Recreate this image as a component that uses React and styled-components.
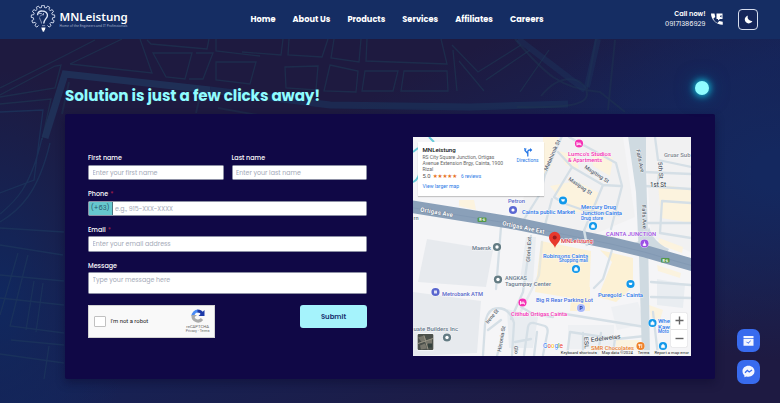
import React from "react";
import styled, { createGlobalStyle } from "styled-components";

const GlobalStyle = createGlobalStyle`
  *, *::before, *::after { box-sizing: border-box; }
  body {
    margin: 0;
    font-family: Poppins, Inter, sans-serif;
    color: #fff;
    overflow: hidden;
  }
`;

const Page = styled.div`
  position: relative;
  isolation: isolate;
  height: 403px;
  overflow: hidden;
  display: flex;
  flex-direction: column;
  background:
    radial-gradient(ellipse 130px 230px at 0 300px, #10285f 0%, rgba(16, 40, 95, 0) 100%),
    radial-gradient(ellipse 260px 190px at 780px 170px, #14285f 10%, rgba(20, 40, 95, 0) 100%),
    linear-gradient(155deg, #1e1a40 35%, #172255 55%, #1e1a42 88%);
`;

const StreetPattern = styled.svg`
  position: absolute;
  inset: 0;
  z-index: -1;
  fill: none;
  stroke: #1e3350;
`;

const Header = styled.header`
  flex: none;
  height: 38.5px;
  padding: 0 22px 0 30px;
  display: grid;
  grid-template-columns: 220.5px 1fr auto;
  align-items: center;
  background: #152d63;
`;

const Brand = styled.div`
  display: flex;
  align-items: center;
  gap: 3.5px;
  height: 28px;
`;

const BrandText = styled.div`
  display: flex;
  flex-direction: column;
`;

const BrandName = styled.span`
  font: 600 11.5px/12px "Noto Sans", sans-serif;
  letter-spacing: 0;
  white-space: nowrap;
`;

const Tagline = styled.span`
  margin-top: 1px;
  font: 3.25px/4px "Noto Sans", sans-serif;
  letter-spacing: 0.03px;
  color: #a9b5d2;
  white-space: nowrap;
`;

const Nav = styled.nav`
  display: flex;
  gap: 17px;
`;

const NavLink = styled.a`
  font-size: 8.22px;
  line-height: 12px;
  font-weight: 700;
  white-space: nowrap;
`;

const HeaderTools = styled.div`
  display: flex;
  align-items: center;
`;

const CallInfo = styled.div`
  display: flex;
  flex-direction: column;
  align-items: flex-end;
  font-size: 6.6px;
  line-height: 10px;
  margin-right: 5.5px;
  strong { font-weight: 600; }
`;

const ThemeButton = styled.button`
  width: 20px;
  height: 20.5px;
  margin-left: 15px;
  padding: 0;
  display: grid;
  place-items: center;
  border: 1px solid #d6dded;
  border-radius: 4px;
  background: #15265a;
  color: #fff;
`;

const Main = styled.main`
  padding: 45px 65px 0;
`;

const TitleRow = styled.div`
  display: flex;
  justify-content: space-between;
  align-items: flex-start;
  height: 30px;
`;

const Title = styled.h1`
  margin: 0;
  font-size: 15.2px;
  line-height: 24px;
  font-weight: 700;
  letter-spacing: -0.1px;
  color: #8ffcff;
  white-space: nowrap;
`;

const Glow = styled.span`
  width: 14px;
  height: 14px;
  margin: -2.5px 6.5px 0 0;
  border-radius: 50%;
  background: #8ffcff;
  box-shadow: 0 0 6px 1px #12a8c6, 0 0 12px #0d86ad, 0 0 20px rgba(10, 110, 160, 0.55);
`;

const Card = styled.section`
  height: 265.5px;
  padding: 23.5px 24px 23px 23px;
  display: flex;
  justify-content: space-between;
  background: #100846;
  border-radius: 2px;
  box-shadow: 0 4px 10px rgba(10, 8, 45, 0.45);
`;

const Form = styled.form`
  width: 279px;
  padding-top: 15.5px;
  display: flex;
  flex-direction: column;
  gap: 8.5px;
`;

const FieldRow = styled.div`
  display: grid;
  grid-template-columns: 1fr 1fr;
  gap: 8px;
`;

const Field = styled.label`
  display: flex;
  flex-direction: column;
  gap: 1.5px;
`;

const Label = styled.span`
  padding-top: 0.5px;
  font-size: 6.4px;
  line-height: 10px;
  font-weight: 500;
  height: 10.7px;
`;

const Required = styled.span`
  color: #9c1d45;
  margin-left: 2px;
`;

const Control = styled.span`
  display: flex;
  height: ${(p) => p.$height || 15.2}px;
  overflow: hidden;
  background: #fff;
  border: 0.5px solid #8d90a5;
  border-radius: 1.5px;
`;

const Input = styled.input`
  flex: 1;
  min-width: 0;
  height: 14px;
  padding: 0 0 0 ${(p) => p.$indent || 3.5}px;
  border: 0;
  outline: 0;
  background: transparent;
  font: 6.3px Poppins, Inter, sans-serif;
  &::placeholder { color: #a3a9b7; opacity: 1; }
`;

const Prefix = styled.span`
  width: 23.5px;
  display: grid;
  place-items: center;
  background: #66c8ce;
  border-right: 1px solid #49747f;
  color: #27576c;
  font-size: 6.7px;
`;

const FormFooter = styled.div`
  display: flex;
  justify-content: space-between;
  align-items: flex-start;
  margin-top: 2.5px;
`;

const Captcha = styled.div`
  width: 127px;
  height: 33px;
  padding: 0 4.5px 0 5px;
  display: flex;
  align-items: center;
  background: #f9f9f9;
  border: 0.5px solid #d3d3d3;
  font-family: Roboto, sans-serif;
  color: #222;
`;

const CheckBox = styled.span`
  width: 11.5px;
  height: 11.5px;
  border: 1px solid #c1c1c1;
  border-radius: 1px;
  background: #fff;
`;

const CaptchaText = styled.span`
  flex: 1;
  margin-left: 5px;
  font-size: 5.9px;
`;

const CaptchaBrand = styled.span`
  display: flex;
  flex-direction: column;
  align-items: center;
  font-size: 4.2px;
  line-height: 5.2px;
  color: #666;
  svg { margin-bottom: 1px; }
  small { font-size: 3.5px; }
`;

const SubmitButton = styled.button`
  width: 67px;
  height: 23.5px;
  padding: 0;
  border: 0;
  border-radius: 3px;
  background: #a5f3fc;
  color: #17306e;
  font: 600 6.9px Poppins, Inter, sans-serif;
`;

const MapFrame = styled.div`
  position: relative;
  width: 278px;
  height: 219px;
  overflow: hidden;
  background: #f3f3f5;
  font-family: Roboto, sans-serif;
`;

const PlaceCard = styled.div`
  position: absolute;
  top: 5px;
  left: 5px;
  width: 125.5px;
  height: 54px;
  padding: 3px 5px 3px 4.5px;
  display: flex;
  justify-content: space-between;
  background: #fff;
  box-shadow: 0 1px 1px rgba(0, 0, 0, 0.2);
`;

const PlaceDetails = styled.div`
  display: flex;
  flex-direction: column;
  align-items: flex-start;
  white-space: nowrap;
`;

const PlaceName = styled.strong`
  font-size: 6.1px;
  line-height: 9px;
  font-weight: 500;
  color: #111;
`;

const Address = styled.span`
  margin-top: 1px;
  font-size: 5.02px;
  line-height: 5.8px;
  color: #666;
`;

const Rating = styled.span`
  margin-top: 1px;
  display: flex;
  align-items: center;
  gap: 2px;
  font-size: 5.9px;
  line-height: 7px;
  color: #555;
`;

const Stars = styled.span`
  color: #e7711b;
  font-size: 5.6px;
  letter-spacing: -0.15px;
  font-family: "DejaVu Sans", sans-serif;
`;

const MapLink = styled.a`
  margin-top: ${(p) => p.$top || 0}px;
  margin-left: ${(p) => p.$left || 0}px;
  font-size: ${(p) => p.$size || 5.1}px;
  line-height: 7px;
  color: #2878e6;
`;

const Directions = styled.div`
  width: 22px;
  padding-top: 1.5px;
  display: flex;
  flex-direction: column;
  align-items: center;
`;

const ZoomControls = styled.div`
  position: absolute;
  right: 4px;
  bottom: 9.5px;
  width: 16px;
  height: 34px;
  display: flex;
  flex-direction: column;
  background: #fff;
  border-radius: 1px;
  box-shadow: 0 0 1px rgba(0, 0, 0, 0.4);
`;

const ZoomButton = styled.button`
  flex: 1;
  padding: 0;
  border: 0;
  background: none;
  display: grid;
  place-items: center;
  & + & { border-top: 0.5px solid #e2e2e2; }
`;

const MapLegal = styled.div`
  position: absolute;
  right: 0;
  bottom: 0;
  height: 6px;
  padding: 0 2px;
  display: flex;
  align-items: center;
  gap: 5px;
  background: rgba(245, 245, 245, 0.75);
  font-size: 4.15px;
  line-height: 6px;
  color: #222;
  white-space: nowrap;
`;

const FloatingActions = styled.aside`
  position: absolute;
  left: 737px;
  top: 329px;
  display: flex;
  flex-direction: column;
  gap: 8px;
`;

const FloatingButton = styled.button`
  width: 23px;
  height: 23.3px;
  padding: 0;
  border: 0;
  border-radius: 7px;
  background: #386bee;
  display: grid;
  place-items: center;
`;

const navItems = ["Home", "About Us", "Products", "Services", "Affiliates", "Careers"];

function Logo() {
  const teeth = [];
  for (let i = 0; i < 11; i++) {
    const a = 127 + i * 28.6;
    const at = (r, d) => {
      const t = ((a + d) * Math.PI) / 180;
      return `${(13 + r * Math.cos(t)).toFixed(2)} ${(12 + r * Math.sin(t)).toFixed(2)}`;
    };
    teeth.push(`${i ? "L" : "M"}${at(9.6, -9)} L${at(11.8, -6)} L${at(11.8, 6)} L${at(9.6, 9)}`);
  }
  return (
    <svg width="26" height="28" viewBox="0 0 26 28" fill="none" stroke="#dbe3f5" strokeWidth="0.9">
      <path d={teeth.join(" ")} strokeLinejoin="round" />
      <path d="M7.600 10.200C7.400 7.200 9.800 5.800 12.200 6c3.500 0 5.700 2.200 5.200 5-.4 2.600-3.700 3.700-3.700 7.400" strokeWidth="1.400" />
      <path d="M9 8.500h2.500l1.500 2M10 11.500l1.500-1.500M13.500 8v2" strokeWidth="0.700" />
      <path d="M9.500 12.500c.4 2.600 2 3.500 2 6M12 20.700h3.200" strokeWidth="0.600" />
      <path d="M11.300 22.500h4.200l-.7 2.700h-2.800z" fill="#fff" stroke="none" />
      <circle cx="13.400" cy="25.800" r="1" fill="#fff" stroke="none" />
    </svg>
  );
}

function Streets() {
  return (
    <StreetPattern width="780" height="403" strokeWidth="1.300">
      <path d="M0 88 62 57 95 40M0 95 55 66 61 65 55 88 0 97M0 104 51 99 42 140M70 64 122 39M70 64 152 73 140 39M147 40 151 44 207 49 209 39M153 53 192 53 185 79 166 77ZM196 53 213 53 203 79 189 79M216 39 216 51 260 56M216 62 256 62 250 84 216 80ZM283 39 281 55 242 52M289 39 288 55 322 57 328 39M334 39 331 58 359 62 361 39M367 39 366 61 447 64 441 39M285 67 318 66 316 90 286 88ZM330 65 358 71 356 92 324 91ZM365 71 398 71 393 91 362 91ZM404 71 447 71 448 91 401 91ZM452 45 478 72 521 45M453 50 457 91M459 61 484 91M486 80 530 50M549 50 520 92" opacity=".75" />
      <path d="M45 138 65 74 210 90" strokeWidth="7" stroke="#20345a" opacity=".85" />
      <path d="M210 90 330 105 470 107 568 104" strokeWidth="7" stroke="#1b3058" opacity=".7" />
      <path d="M69 82 62 114M200 96l-4 17M218 108l40 7M515 39c30 35 45 50 85 53l25 20M596 39l-9 50M541 96c20-25 45-19 46-2 0 11-20 14-70 13M615 40l-7 70" strokeWidth="2" opacity=".5" />
      <path d="M518 39 585 90M598 39l-11 48" strokeWidth="6" stroke="#1c3159" opacity=".5" />
      <path d="M42 138 C30 190 14 202 0 214M50 143C38 193 20 210 0 222M0 112 43 110 34 180 0 193M0 228 64 232M0 245 63 255M18 253 0 315M28 255 10 326 64 333M0 275 64 281M34 281 26 330M43 283 36 332M64 305 0 298M11 340 64 345M0 354 64 363M49 346 44 379" stroke="#1c365c" opacity=".75" />
    </StreetPattern>
  );
}

const blue = "#2a76e8";
const slate = "#66778a";
const indigo = "#5867c9";
const pink = "#f531b4";

/* text, x, y, width, fill, size, rotation */
const mapLabels = [
  ["Lumco's Studios", 155, 19, 43, pink, 6],
  ["& Apartments", 155, 25, 34, pink, 6],
  ["Matahimik St", 134, 34, 33, "#59636e", 5.4, -66],
  ["Magiting St", 171, 31, 28, "#59636e", 5.4, 33],
  ["Masipag St", 155, 43, 27, "#59636e", 5.4, 34],
  ["Gruar Sub", 251, 19.500, 26.5, "#7d858e", 5.6],
  ["5th St", 245, 25, 17, "#59636e", 6, 86],
  ["1st St", 237, 50, 16, "#4f5862", 6.5],
  ["Falls Ave", 223, 13, 23, "#59636e", 5.5, 78],
  ["Falls Ave", 229, 68, 24, "#59636e", 5.5, 88],
  ["Petron", 95, 66, 17, indigo, 5.8],
  ["Cainta public Market", 109, 76.500, 53, blue, 6],
  ["Mercury Drug", 168, 72, 35, blue, 6],
  ["Junction Cainta", 168, 78, 41, blue, 6],
  ["Drug store", 168, 83, 22, blue, 4.7],
  ["CAINTA JUNCTION", 193, 99.200, 50, "#9d4ce2", 6],
  ["Maersk", 59, 113, 19, slate, 6],
  ["Gloria Ext", 117, 125, 25, "#59636e", 5.5, -87],
  ["Robinsons Cainta", 130, 120.500, 45, blue, 6],
  ["Shopping mall", 146, 125, 29, blue, 4.7],
  ["ANGKAS", 92, 143, 22, slate, 6],
  ["Tagumpay Center", 92, 149, 46, slate, 6],
  ["Metrobank ATM", 29, 158.500, 41, indigo, 6],
  ["Puregold - Cainta", 185, 160, 45, blue, 6],
  ["Big R Rear Parking Lot", 123, 164.500, 57, "#3c6ee0", 6],
  ["Citihub Ortigas Cainta", 98, 179, 56, pink, 6],
  ["Irene St", 75, 187, 17, "#59636e", 5.3, -50],
  ["Hinonia St", 88, 215, 26, "#59636e", 5.3, -80],
  ["Glo", 101, 209, 8, "#59636e", 5.3, 85],
  ["uate Builders Inc", 0.5, 194, 44.5, slate, 6],
  ["Edelweiss", 178, 205, 30, "#4f5862", 6.2, -7],
  ["ESL", 171, 200, 12, "#4f5862", 6, 86],
  ["SMR Chocolates", 178, 212.500, 43, "#e6792b", 6],
  ["Whe", 245, 186, 12, blue, 6],
  ["Kaw", 245, 191.500, 12, blue, 6],
  ["Moto", 245, 196, 11, blue, 4.5],
  ["rn", 0.5, 83, 5, slate, 6],
];

const pins = [
  [166, 6.5, pink, "bed"],
  [150, 63.5, "#1298ea", "cart"],
  [180, 89, "#1298ea", "bag"],
  [100, 73, "#5b68d3", "dot"],
  [231.5, 106.5, "#9c50e5", "person"],
  [84, 110, "#637b83", "ring"],
  [85, 142.500, "#637b83", "ring"],
  [22.500, 155, "#5966ce", "square"],
  [163, 132, "#1298ea", "bag"],
  [217.500, 147, "#1298ea", "cart"],
  [109.500, 165.500, pink, "bed"],
  [168, 171, "#6b86f0", "parking"],
  [34, 200.500, "#637b83", "ring"],
  [239.500, 186, "#1298ea", "bag"],
  [227.500, 209, "#ef8128", "food"],
  [250, 209, "#1298ea", "bag"],
];

function PinGlyph({ kind }) {
  if (kind === "ring") return <circle r="1.700" fill="#fff" />;
  if (kind === "square") return <rect x="-1.500" y="-1.500" width="3" height="3" fill="#fff" opacity=".8" />;
  if (kind === "dot") return <circle r="1.600" fill="#fff" />;
  if (kind === "bed") return <path d="M-2-1.500V2M-2 .8h4V2M-1.200-.3h3" stroke="#fff" strokeWidth=".9" />;
  if (kind === "cart") return <path d="M-2-1.300h4l-.8 2.300h-2.200z" fill="#fff" />;
  if (kind === "bag") return <path d="M-1.700-.6h3.400v2.400h-3.400zM-.9-.6c0-1.700 1.800-1.700 1.800 0" fill="#fff" stroke="#fff" strokeWidth=".4" />;
  if (kind === "food") return <path d="M-1-2V2M1.200-2V2M-1.800-2v1.500h1.600V-2" stroke="#fff" strokeWidth=".7" fill="none" />;
  if (kind === "parking") return <text y="1.800" fontSize="5" fontWeight="700" textAnchor="middle" fill="#29449f">P</text>;
  return <path d="M-1.300 2c0-3 2.600-3 2.600 0zM0-2v1.400" fill="#fff" stroke="#fff" strokeWidth=".8" />;
}

function MapDrawing() {
  return (
    <svg width="278" height="219" viewBox="0 0 278 219" fill="none">
      <rect width="278" height="219" fill="#f5f5f7" />
      <path d="M136 0h74l12 80-47 20-74-16 14-34z M232 0h46v115l-40-15z" fill="#f1f1f2" />
      <path d="M14 102 80 113 73 150 5 145ZM0 155 68 164 64 216 0 219Z" fill="#e7eaee" />
      <path d="M130 0h15l-7 30-8 10zM145 14l17 4 4 14-13-4zM179 13l21 8-3 18-17-10zM137 49l26-5 23 12-3 22-25-4zM245 47l33 5v34l-30-5zM246 101l24 9-1 6-24-9zM46 63l15 0 2 10-17-4z" fill="#fdf3dc" opacity=".9" />
      <path d="M128 104 178 114 176 164 122 155ZM187 113 220 121 220 150 203 165 185 160 199 125ZM159 150h18v24h-20z" fill="#fcf1d5" />
      <path d="M155 188h46v24h-46zM198 170l27-5 7 22-28 6z" fill="#eef0f3" />
      <path d="M113 100h10l-3 46-13-3zM94 172l31 8-5 31-24 0zM244 142l28 5-2 24-26-3z" fill="#e9edf1" />
      <path d="M244 128l24 8-1 5-22-7zM236 168l14 5-3 10-9-2zM203 203h24v10h-24z" fill="#fbf3df" />
      <g stroke="#d5dfe6" strokeWidth="2.300" strokeLinejoin="round" strokeLinecap="round">
        <path d="M149-1 132 38 127 57 110 84" />
        <path d="M145 15 159 30 190 48 207 49M156 0 203 26 209 49 198 92M159 30 141 60 150 66 173 74M190 48 180 72 170 96M139 62 132 88M173 74 206 78" />
        <path d="M231 35 278 37M232 49 278 52M246 37 244 50M233 86 278 86M249 64 278 66M249 64 247 96 278 101M242 0 245 23 278 30" />
        <path d="M118 99 110 155 98 182M88 90 83 152" />
        <path d="M70 218 72 188Q73 176 80 172 96 168 101 186L99 218M88 183 75 193M84 219 91 192M108 170 120 177 140 180" />
        <path d="M111 218 115 190Q116 185 121 186L132 189Q136 191 134 198L130 218M102 205 118 202M124 195 121 219M154 219 157 195M146 176 232 190M157 195 204 202 232 199M202 201 200 218M170 196 170 217M188 196 185 217M238 160 278 161M238 145 278 148M240 175 245 219M200 110 190 142 181 151" />
        <path d="M107 176 126 138 129 105" opacity=".5" />
      </g>
      <path d="M215-1 233-1 233 31 235 100 237 219 229 219 226 120 223 55Z" fill="#cfdae1" />
      <path d="M220 106Q232 104 236 90L239 98Q246 108 256 112L252 119Z" fill="#cfdae1" />
      <path d="M-2 69.500 60 79.500 100 86 144 95 200 106.500 233 114.500Q255 121 280 128" stroke="#8aa0b9" strokeWidth="12.500" />
      <path d="M-2 70.500 60 80.500 100 87 144 96 200 107.500 233 115.500Q255 122 280 129" stroke="#7f97b1" strokeWidth=".7" />
      <path d="M171 93 174 109" stroke="#d3dfe6" strokeWidth="2.500" />
      <path d="M0 45Q7 42 7 30M16 0l5 5M0 15l5-4" stroke="#67cad9" strokeWidth="2" />
      <g fill="#53994a">
        <rect x="64.500" y="80.500" width="9" height="4.500" rx="1" />
        <rect x="248" y="121" width="8.500" height="4.500" rx="1" />
      </g>
      <g fontSize="3.500" fontWeight="700" fill="#fff">
        <text x="66.300" y="84">R-6</text>
        <text x="249.500" y="124.500">R-6</text>
      </g>
      <g fontSize="6.100" fontWeight="600" fill="#fff" stroke="#74859b" strokeWidth=".9" paintOrder="stroke">
        <text transform="translate(7 74.500) rotate(9.500)" textLength="33">Ortigas Ave</text>
        <text transform="translate(89 88) rotate(12)" textLength="43">Ortigas Ave Ext</text>
      </g>
      <g stroke="#fff" strokeWidth=".8" paintOrder="stroke" strokeOpacity=".75">
        {mapLabels.map(([text, x, y, width, fill, size, angle = 0]) => (
          <text key={`${text}-${x}-${y}`} transform={`translate(${x} ${y}) rotate(${angle})`} textLength={width} lengthAdjust="spacingAndGlyphs" fontSize={size} fontWeight="500" fill={fill}>{text}</text>
        ))}
      </g>
      {pins.map(([x, y, color, kind]) => (
        <g key={`${x}-${y}`} transform={`translate(${x} ${y})`}>
          <circle r="4.600" fill="#fff" opacity=".7" />
          <circle r="4.100" fill={kind === "parking" ? "#a9b9fa" : color} />
          <PinGlyph kind={kind} />
        </g>
      ))}
      <path d="M142 111c-1-4-6-6-6-10.500a5.700 5.700 0 0 1 11.400 0c0 4.500-4.400 6.500-5.400 10.500z" fill="#e8392d" />
      <circle cx="141.700" cy="100.500" r="2" fill="#9b1c1c" />
      <text x="148" y="105.500" fontSize="6" fontWeight="500" fill="#d9323a" stroke="#fff" strokeWidth=".8" paintOrder="stroke" textLength="32">MNLeistung</text>
      <g transform="translate(4 196.500)">
        <rect width="17" height="17" rx="1" fill="#fff" />
        <rect x=".6" y=".6" width="15.800" height="15.800" rx="1" fill="#4b504b" />
        <path d="m1 4 6-2 2 4-4 3zM9 8l6-3v6l-3 2zM3 12l5-2 2 5-6 1z" fill="#77766c" />
        <path d="m7 2 4 14M1 10l15-5" stroke="#9a9687" />
        <path d="M11 10h4v4h-4z" fill="#34413d" />
      </g>
      <g fontFamily="Inter, sans-serif" fontSize="6.600" fontWeight="500" stroke="#fff" strokeWidth=".8" paintOrder="stroke">
        <text x="130" y="210.500" textLength="20" lengthAdjust="spacingAndGlyphs"><tspan fill="#4285f4">G</tspan><tspan fill="#ea4335">o</tspan><tspan fill="#fbbc05">o</tspan><tspan fill="#4285f4">g</tspan><tspan fill="#34a853">l</tspan><tspan fill="#ea4335">e</tspan></text>
      </g>
    </svg>
  );
}

function MapPanel() {
  return (
    <MapFrame>
      <MapDrawing />
      <PlaceCard>
        <PlaceDetails>
          <PlaceName>MNLeistung</PlaceName>
          <Address>RS City Square Junction, Ortigas<br />Avenue Extension Brgy, Cainta, 1900<br />Rizal</Address>
          <Rating>5.0 <Stars>★★★★★</Stars><MapLink $size={4.8} $left={2}>6 reviews</MapLink></Rating>
          <MapLink $top={3}>View larger map</MapLink>
        </PlaceDetails>
        <Directions>
          <svg width="10" height="10" viewBox="0 0 10 10" fill="none" stroke="#2878e6" strokeWidth="1.300">
            <path d="M4.800 9.500V6.500L1.800 3.200M4.800 6.500V4.500Q4.800 3 6.500 3H8.300" />
            <path d="m1 1 2.800.8L1.700 4zM7 1l2.300 2L7 5z" fill="#2878e6" stroke="none" />
          </svg>
          <MapLink $size={4.9}>Directions</MapLink>
        </Directions>
      </PlaceCard>
      <ZoomControls>
        <ZoomButton type="button" aria-label="Zoom in">
          <svg width="9" height="9" stroke="#666" strokeWidth="1.400"><path d="M4.500.5v8M.5 4.500h8" /></svg>
        </ZoomButton>
        <ZoomButton type="button" aria-label="Zoom out">
          <svg width="9" height="9" stroke="#666" strokeWidth="1.400"><path d="M.5 4.500h8" /></svg>
        </ZoomButton>
      </ZoomControls>
      <MapLegal><span>Keyboard shortcuts</span><span>Map data ©2024</span><span>Terms</span><span>Report a map error</span></MapLegal>
    </MapFrame>
  );
}

export default function App() {
  return (
    <Page>
      <GlobalStyle />
      <Streets />
      <Header>
        <Brand>
          <Logo />
          <BrandText>
            <BrandName>MNLeistung</BrandName>
            <Tagline>Home of the Engineers and IT Professionals</Tagline>
          </BrandText>
        </Brand>
        <Nav>
          {navItems.map((text) => <NavLink key={text}>{text}</NavLink>)}
        </Nav>
        <HeaderTools>
          <CallInfo><strong>Call now!</strong><span>09171386929</span></CallInfo>
          <svg width="12" height="12" viewBox="0 0 24 24" fill="#fff">
            <path d="M0 1h7l1.500 7-4 3.500c2 4 4.500 6.500 8.500 8.500l3.500-4 7 1.500v6C11 24 0 13 0 1z" />
            <path d="M11 1h12v11h-5l-4 3v-3h-3z" />
            <path d="m18 6 3-2v5l-3-2z" fill="#152d63" />
          </svg>
          <ThemeButton type="button" aria-label="Dark mode">
            <svg width="9" height="9" viewBox="0 0 9 9"><path d="M4 .5a4 4 0 1 0 4.500 5.500A4 4 0 0 1 4 .5z" fill="#fff" /></svg>
          </ThemeButton>
        </HeaderTools>
      </Header>
      <Main>
        <TitleRow>
          <Title>Solution is just a few clicks away!</Title>
          <Glow />
        </TitleRow>
        <Card>
          <Form>
            <FieldRow>
              <Field><Label>First name</Label><Control><Input placeholder="Enter your first name" /></Control></Field>
              <Field><Label>Last name</Label><Control><Input placeholder="Enter your last name" /></Control></Field>
            </FieldRow>
            <Field>
              <Label>Phone<Required>*</Required></Label>
              <Control><Prefix>(+63)</Prefix><Input $indent={2.5} placeholder="e.g., 915-XXX-XXXX" /></Control>
            </Field>
            <Field>
              <Label>Email<Required>*</Required></Label>
              <Control><Input placeholder="Enter your email address" /></Control>
            </Field>
            <Field>
              <Label>Message</Label>
              <Control $height={21.5}><Input placeholder="Type your message here" /></Control>
            </Field>
            <FormFooter>
              <Captcha>
                <CheckBox />
                <CaptchaText>I'm not a robot</CaptchaText>
                <CaptchaBrand>
                  <svg width="14" height="14" viewBox="0 0 14 14" fill="none" strokeWidth="3">
                    <path d="M2 7a5 5 0 0 1 5-5" stroke="#4a8bf5" />
                    <path d="M6.500 2Q10 2 11.600 5" stroke="#1c3aa9" />
                    <path d="M13.500 1v6H7.500z" fill="#1c3aa9" />
                    <path d="M2 6.500A5 5 0 0 0 11 10" stroke="#ababab" />
                    <path d="M.5 6h5.500L2.500 9z" fill="#ababab" />
                  </svg>
                  <span>reCAPTCHA</span>
                  <small>Privacy - Terms</small>
                </CaptchaBrand>
              </Captcha>
              <SubmitButton type="button">Submit</SubmitButton>
            </FormFooter>
          </Form>
          <MapPanel />
        </Card>
      </Main>
      <FloatingActions>
        <FloatingButton type="button" aria-label="Book an appointment">
          <svg width="11" height="11" viewBox="0 0 11 11">
            <path d="M.5 1h10v2H.5zM.5 3.700h10v7H.5z" fill="#f3f6ff" />
            <path d="m3.500 6.800 1.500 1.500L7.700 5.800" fill="none" stroke="#386bee" strokeWidth="1" />
          </svg>
        </FloatingButton>
        <FloatingButton type="button" aria-label="Messenger">
          <svg width="13" height="13" viewBox="0 0 13 13">
            <path d="M6.500.8C3 .8.500 3.200.500 6.300c0 1.700.7 3.100 1.900 4.100v1.900l1.900-.9c.7.2 1.400.3 2.200.3 3.400 0 6-2.300 6-5.400S9.900.8 6.500.8z" fill="#f3f6ff" />
            <path d="M3 7.700 5.300 5.300 7.200 7 10 5" fill="none" stroke="#386bee" strokeWidth="1.300" />
          </svg>
        </FloatingButton>
      </FloatingActions>
    </Page>
  );
}
